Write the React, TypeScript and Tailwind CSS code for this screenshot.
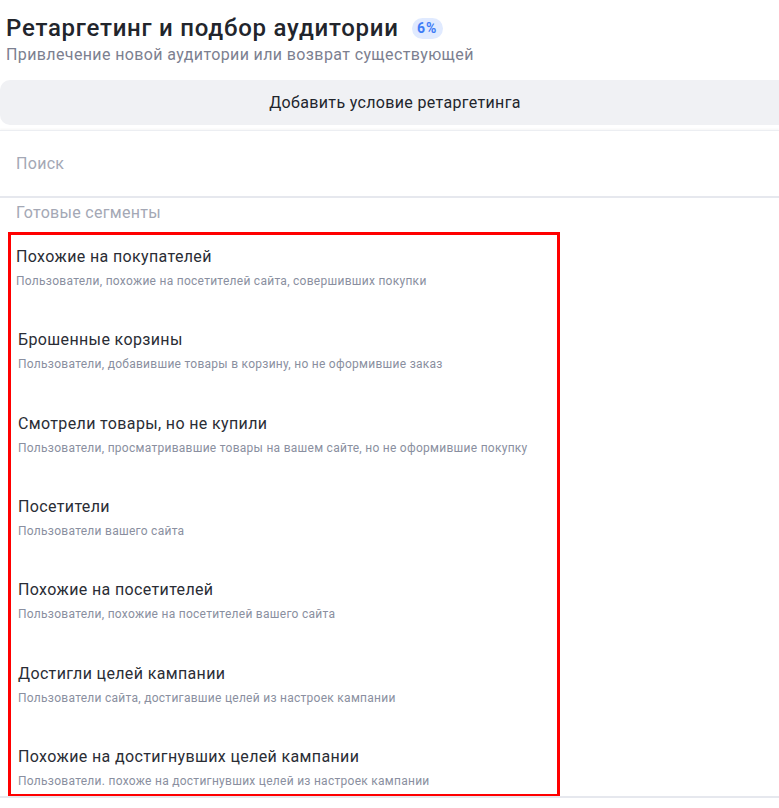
import React from "react";

const items = [
  ["Похожие на покупателей", "Пользователи, похожие на посетителей сайта, совершивших покупки"],
  ["Брошенные корзины", "Пользователи, добавившие товары в корзину, но не оформившие заказ"],
  ["Смотрели товары, но не купили", "Пользователи, просматривавшие товары на вашем сайте, но не оформившие покупку"],
  ["Посетители", "Пользователи вашего сайта"],
  ["Похожие на посетителей", "Пользователи, похожие на посетителей вашего сайта"],
  ["Достигли целей кампании", "Пользователи сайта, достигавшие целей из настроек кампании"],
  ["Похожие на достигнувших целей кампании", "Пользователи. похоже на достигнувших целей из настроек кампании"],
];

export default function App() {
  return (
    <div className="w-[779px] h-[808px] overflow-hidden bg-white font-['Roboto',sans-serif]">
      <div className="pl-[6px] pt-[14px]">
        <div className="flex items-center h-[28px]">
          <h1 className="text-[24px] leading-[28px] font-medium tracking-[0.76px] text-[#22252c]">Ретаргетинг и подбор аудитории</h1>
          <span className="ml-[13px] h-[21px] w-[31px] flex items-center justify-center rounded-full bg-[#e0eaff] text-[#3f7cf6] text-[14px] font-bold leading-[21px] tracking-[1px]">6%</span>
        </div>
        <p className="mt-[2px] text-[16px] leading-[22px] tracking-[0.38px] text-[#7c8090]">Привлечение новой аудитории или возврат существующей</p>
      </div>
      <div className="mt-[14px] w-[790px] h-[45px] rounded-l-[10px] bg-[#f0f1f4] flex items-center justify-center text-[16px] tracking-[0.34px] text-[#22252c]">
        Добавить условие ретаргетинга
      </div>
      <div className="mt-[5px] border-t border-[#eceef2] shadow-[0_-1px_2px_rgba(0,0,0,0.04)]">
        <div className="h-[65px] flex items-center px-[16px] text-[16px] tracking-[0.3px] text-[#a4a8b5]">Поиск</div>
        <div className="h-[2px] bg-[#e6e8ee]" />
        <div className="h-[30px] flex items-center px-[16px] text-[16px] tracking-[0.3px] text-[#a4a8b5]">Готовые сегменты</div>
        <div className="ml-[8px] mt-[4px] w-[552px] h-[565px] border-[3px] border-[#ff0000] overflow-hidden">
          {items.map(([t, d], i) => (
            <div key={t} className={`h-[83.33px] pt-[12px] ${i === 0 ? "pl-[5px]" : "pl-[7px]"}`}>
              <div className="text-[16px] leading-[20px] tracking-[0.36px] text-[#2a2d35]">{t}</div>
              <div className="mt-[6px] text-[12px] leading-[16px] tracking-[0.27px] text-[#8a8fa0]">{d}</div>
            </div>
          ))}
        </div>
        <div className="h-[2px] -mt-[1px] bg-[#e6e8ee]" />
      </div>
    </div>
  );
}
